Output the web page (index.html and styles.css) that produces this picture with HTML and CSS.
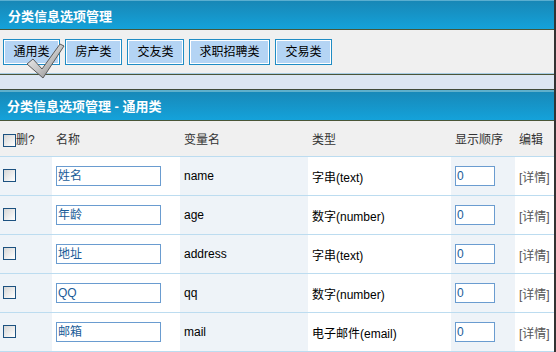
FILE: index.html
```html
<!DOCTYPE html>
<html>
<head>
<meta charset="utf-8">
<link rel="stylesheet" href="styles.css">
</head>
<body>
<div class="page">
  <div class="bar bar-top">分类信息选项管理</div>
  <div class="tabs">
    <span class="tab">通用类</span>
    <span class="tab">房产类</span>
    <span class="tab">交友类</span>
    <span class="tab">求职招聘类</span>
    <span class="tab">交易类</span>
    <svg class="check" width="40" height="40" viewBox="0 0 40 40">
      <defs>
        <linearGradient id="cg" x1="0" y1="0" x2="1" y2="1">
          <stop offset="0" stop-color="#ffffff"/>
          <stop offset="0.5" stop-color="#c8c8c8"/>
          <stop offset="1" stop-color="#7a7a7a"/>
        </linearGradient>
      </defs>
      <polygon points="1,21 7,16 16,26 34,1 38,3 17,35" fill="url(#cg)" stroke="#5a5a5a" stroke-width="1" stroke-linejoin="round"/>
    </svg>
  </div>
  <div class="strip"></div>
  <div class="bar bar-sub">分类信息选项管理 - 通用类</div>
  <table class="grid">
    <colgroup>
      <col class="c1"><col class="c2"><col class="c3"><col class="c4"><col class="c5"><col class="c6">
    </colgroup>
    <thead>
      <tr>
        <th><span class="cb"></span>删?</th>
        <th>名称</th>
        <th>变量名</th>
        <th>类型</th>
        <th>显示顺序</th>
        <th>编辑</th>
      </tr>
    </thead>
    <tbody>
      <tr>
        <td class="alt"><span class="cb"></span></td>
        <td><span class="field">姓名</span></td>
        <td class="alt">name</td>
        <td>字串(text)</td>
        <td class="alt"><span class="field num">0</span></td>
        <td class="edit">[详情]</td>
      </tr>
      <tr>
        <td class="alt"><span class="cb"></span></td>
        <td><span class="field">年龄</span></td>
        <td class="alt">age</td>
        <td>数字(number)</td>
        <td class="alt"><span class="field num">0</span></td>
        <td class="edit">[详情]</td>
      </tr>
      <tr>
        <td class="alt"><span class="cb"></span></td>
        <td><span class="field">地址</span></td>
        <td class="alt">address</td>
        <td>字串(text)</td>
        <td class="alt"><span class="field num">0</span></td>
        <td class="edit">[详情]</td>
      </tr>
      <tr>
        <td class="alt"><span class="cb"></span></td>
        <td><span class="field">QQ</span></td>
        <td class="alt">qq</td>
        <td>数字(number)</td>
        <td class="alt"><span class="field num">0</span></td>
        <td class="edit">[详情]</td>
      </tr>
      <tr>
        <td class="alt"><span class="cb"></span></td>
        <td><span class="field">邮箱</span></td>
        <td class="alt">mail</td>
        <td>电子邮件(email)</td>
        <td class="alt"><span class="field num">0</span></td>
        <td class="edit">[详情]</td>
      </tr>
    </tbody>
  </table>
</div>
</body>
</html>
```
FILE: styles.css
```css
html, body {
  margin: 0;
  padding: 0;
  background: #ffffff;
}
.page {
  width: 556px;
  font-family: "Liberation Sans", "Noto Sans CJK SC", sans-serif;
  font-size: 12px;
  color: #000;
  box-sizing: border-box;
  border-right: 2px solid #333;
}
.bar {
  color: #fff;
  font-weight: bold;
  font-size: 13px;
  display: flex;
  align-items: center;
  background: linear-gradient(#1887b6, #14a2da);
  border-bottom: 1px solid #4a5638;
}
.bar-top {
  height: 28px;
  padding-left: 8px;
  border-top: 1px solid #5aaed0;
}
.bar-sub {
  height: 30px;
  padding-left: 7px;
  border-top: 1px solid #3f4b3a;
  box-shadow: inset 0 2px 0 #5fb0cc;
}
.tabs {
  position: relative;
  height: 44px;
  background: #f0f0f0;
  border-bottom: 1px solid #a8cde4;
  display: flex;
  align-items: flex-start;
  gap: 5px;
  padding: 9px 0 0 3px;
  box-sizing: border-box;
}
.tab {
  height: 24px;
  line-height: 24px;
  padding: 0 9.5px;
  background: #b4d4f4;
  border: 1px solid #1f8cc4;
  box-shadow: inset 0 0 0 1px #fff;
  color: #000;
}
.check {
  position: absolute;
  left: 26px;
  top: 13px;
}
.strip {
  height: 14px;
  background: #dce6f2;
  border-top: 1px solid #4a5638;
}
.grid {
  width: 554px;
  border-collapse: collapse;
  table-layout: fixed;
}
.c1 { width: 52px; }
.c2 { width: 128px; }
.c3 { width: 128px; }
.c4 { width: 143px; }
.c5 { width: 64px; }
.c6 { width: 39px; }
.grid th {
  height: 35px;
  background: #f0f0f0;
  color: #333;
  font-weight: normal;
  text-align: left;
  padding: 0 0 0 4px;
  border-bottom: 1px solid #bcdcf0;
  white-space: nowrap;
}
.grid th:first-child,
.grid td:first-child {
  padding-left: 3px;
}
.grid td {
  height: 38px;
  padding: 0 0 0 4px;
  border-bottom: 1px solid #bcdcf0;
  background: #fff;
  white-space: nowrap;
}
.grid td.alt {
  background: #eef3f8;
}
.grid td.edit {
  color: #555;
}
.cb {
  display: inline-block;
  width: 11px;
  height: 11px;
  border: 1px solid #1c5180;
  background: linear-gradient(135deg, #d6d6d6, #ffffff);
  vertical-align: middle;
}
.grid td .cb {
  margin-top: -2px;
}
.field {
  display: inline-block;
  box-sizing: border-box;
  width: 105px;
  height: 20px;
  line-height: 18px;
  border: 1px solid #6a9cd0;
  background: #fff;
  color: #1a5c98;
  padding-left: 1px;
  vertical-align: middle;
}
.field.num {
  width: 40px;
}
```
